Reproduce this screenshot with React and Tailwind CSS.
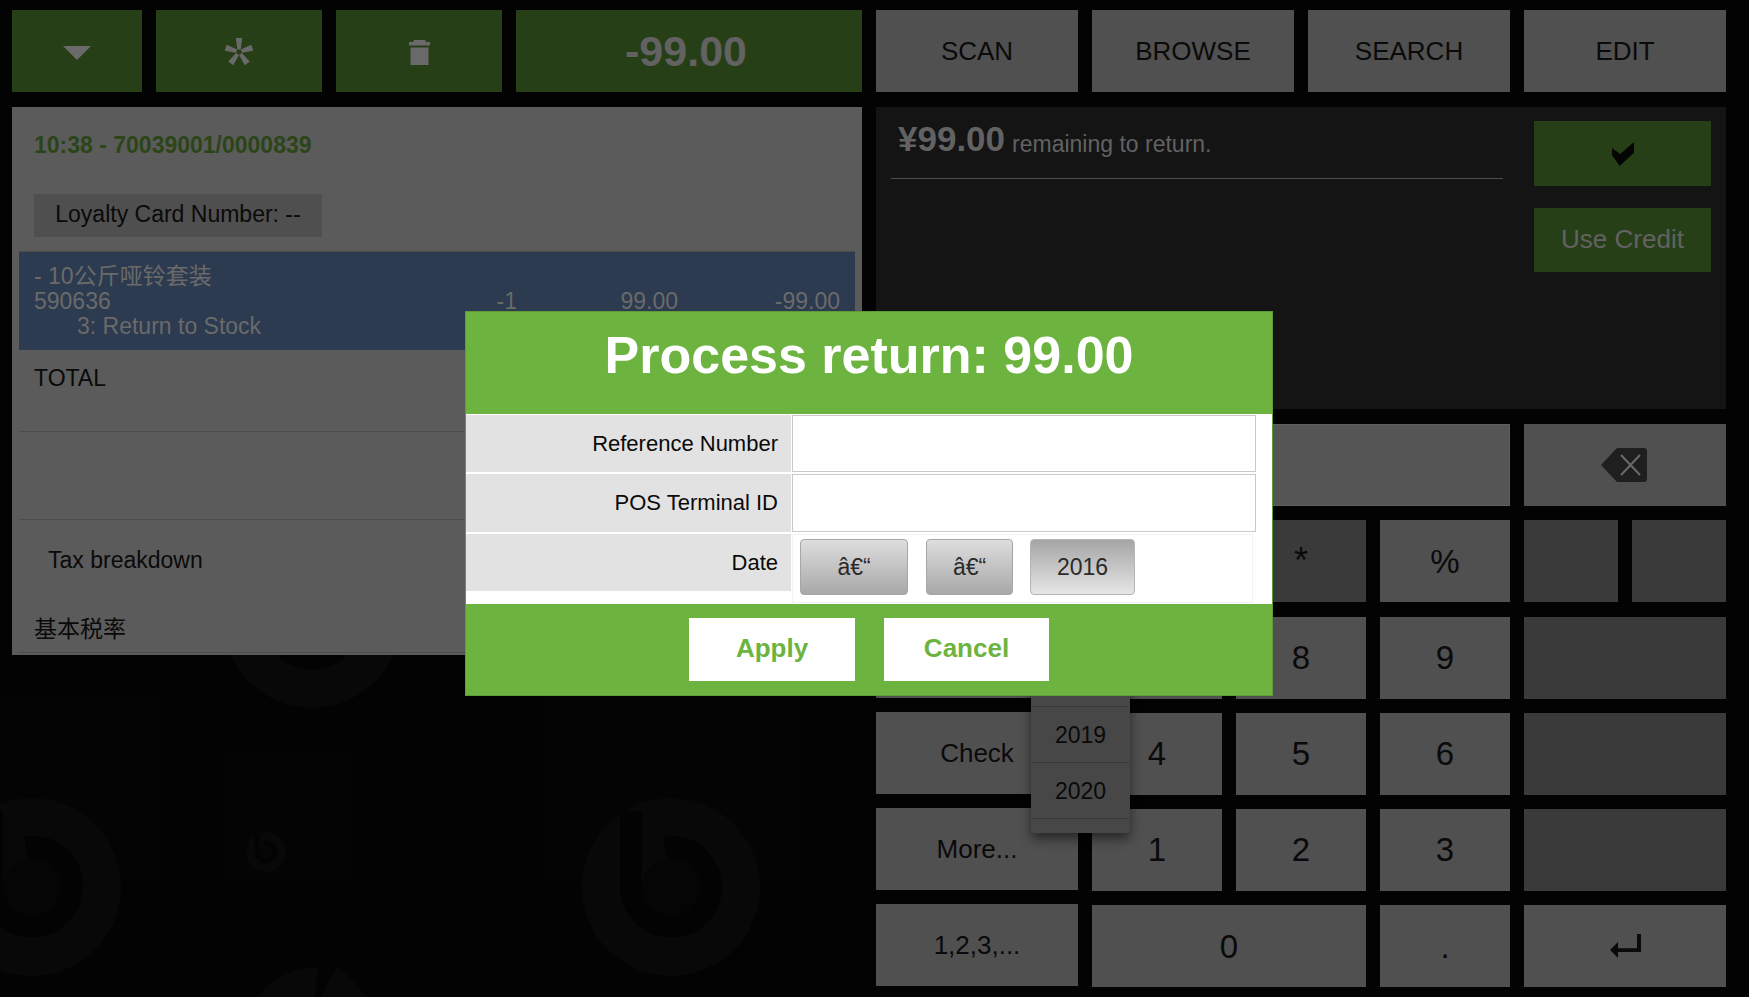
const sans = "font-['Liberation_Sans','Noto_Sans_CJK_SC',sans-serif]";

function Logo({ cx, cy, r }) {
  // faint round watermark behind the panels
  const s = r / 89;
  return (
    <g transform={`translate(${cx} ${cy}) scale(${s})`}>
      <circle r="89" fill="#080808" />
      <circle r="29" fill="#050505" />
      <path d="M-40 -76V0A40 40 0 1 0 -6 -40" fill="none" stroke="#030303" strokeWidth="22" />
    </g>
  );
}

function Key({ className = "bg-[#505050]", children }) {
  return (
    <div className={`flex items-center justify-center text-[#0a0a0a] ${className}`}>
      {children}
    </div>
  );
}

function GreenButton({ className = "", children }) {
  return (
    <div className={`flex h-[82px] items-center justify-center bg-[#273f17] text-[#626262] ${className}`}>
      {children}
    </div>
  );
}

export default function App() {
  const digit = "bg-[#505050] text-[33px]";
  const action = "bg-[#505050] text-[26px] h-[82px]";
  return (
    <div className={`relative flex h-screen overflow-hidden bg-[#030303] pl-3 pt-2.5 ${sans}`}>
      <svg className="absolute inset-0" width="1749" height="997">
        <rect x="0" y="700" width="163" height="177" fill="#040404" />
        <rect x="225" y="750" width="130" height="127" fill="#040404" />
        <rect x="544" y="700" width="258" height="177" fill="#040404" />
        <Logo cx={32} cy={887} r={89} />
        <Logo cx={312} cy={619} r={89} />
        <Logo cx={266} cy={852} r={20} />
        <Logo cx={671} cy={887} r={89} />
        <path d="M258 997q20-28 60-30l-3 30zM322 997q5-18 16-30q16 12 28 30z" fill="#080808" />
      </svg>

      {/* left column */}
      <div className="relative w-[850px] shrink-0">
        <div className="flex gap-[14px]">
          <GreenButton className="w-[130px]">
            <svg className="mt-[3px]" width="28" height="14" viewBox="0 0 28 14"><path d="M0 0h28L14 14z" fill="#6a6a6a" /></svg>
          </GreenButton>
          <GreenButton className="w-[166px]">
            <svg className="mt-[2px]" width="28" height="28" viewBox="-14 -14 28 28" fill="#6a6a6a">
              {[0, 72, 144, 216, 288].map((a) => (
                <path key={a} transform={`rotate(${a})`} d="M-1.700 -2.500L-3.100 -14H3.100L1.700 -2.500z" />
              ))}
            </svg>
          </GreenButton>
          <GreenButton className="w-[166px]">
            <svg className="mt-[2px]" width="21" height="25" viewBox="0 0 21 25" fill="#6a6a6a">
              <path d="M5 0h11l1 2h4v3.500H0V2h4zM1.500 7.500h18V25h-18z" />
            </svg>
          </GreenButton>
          <GreenButton className="flex-1 pr-[6px] text-[43px] font-bold">-99.00</GreenButton>
        </div>

        <div className="mt-[15px] h-[548px] overflow-hidden bg-[#5b5b5b] text-[23px] text-[#0a0a0a]">
          <div className="px-[22px] pt-[24px] font-bold leading-[28px] text-[#2b4519]">
            10:38 - 70039001/0000839
          </div>
          <div className="ml-[22px] mt-[35px] flex h-[43px] w-[288px] items-center justify-center bg-[#4f4f4f] pb-[3px]">
            Loyalty Card Number: --
          </div>
          <div className="mx-[7px] mt-[14px] h-[99px] border-t border-[#4d4d4d] bg-[#2c3b50] pl-[15px] pr-[15px] pt-[12px] leading-[25px] text-[#6a6a6a]">
            <div>- 10公斤哑铃套装</div>
            <div className="flex">
              <span className="flex-1">590636</span>
              <span className="w-[60px] text-right">-1</span>
              <span className="w-[161px] text-right">99.00</span>
              <span className="w-[162px] text-right">-99.00</span>
            </div>
            <div className="pl-[43px]">3: Return to Stock</div>
          </div>
          <div className="mx-[7px] h-[82px] border-b border-[#4d4d4d] pl-[15px] pt-[14px] leading-[28px]">TOTAL</div>
          <div className="mx-[7px] h-[88px] border-b border-[#4d4d4d]" />
          <div className="mx-[7px] pl-[29px] pt-[26px] leading-[28px]">Tax breakdown</div>
          <div className="mx-[7px] border-b border-[#4d4d4d] pl-[15px] pt-[41px] pb-[9px] leading-[28px]">基本税率</div>
        </div>
      </div>

      {/* right column */}
      <div className="relative ml-[14px] w-[850px] shrink-0">
        <div className="grid grid-cols-4 gap-[14px] text-[26px]">
          {["SCAN", "BROWSE", "SEARCH", "EDIT"].map((t) => (
            <Key key={t} className="h-[82px] bg-[#505050]">{t}</Key>
          ))}
        </div>

        <div className="mt-[15px] flex h-[302px] bg-[#141414] pl-[15px] pr-[15px] pt-[14px]">
          <div className="h-[58px] w-[612px] border-b border-[#4e4e4e] pl-[7px] text-[#626262]">
            <span className="text-[35px] font-bold leading-[36px]">¥99.00</span>
            <span className="ml-[7px] align-[-1px] text-[23px]">remaining to return.</span>
          </div>
          <div className="ml-[31px] flex w-[177px] flex-col gap-[22px]">
            <GreenButton className="!h-[65px]">
              <svg width="22" height="24" viewBox="0 0 22 24"><path d="M0 6.300L8.300 12 22 0v10.700L7.700 24 0 13z" fill="#050505" /></svg>
            </GreenButton>
            <GreenButton className="!h-[64px] pb-[2px] text-[26px] text-[#5d5d5d]">Use Credit</GreenButton>
          </div>
        </div>

        <div className="mt-[15px] flex gap-[14px]">
          <div className="flex w-[202px] flex-col gap-[14px]">
            <Key className={action} />
            <Key className={action} />
            <Key className={action} />
            <Key className={action}>Check</Key>
            <Key className={action}>More...</Key>
            <Key className={action}>1,2,3,...</Key>
          </div>
          <div className="grid flex-1 grid-cols-[130px_130px_130px_94px_94px] auto-rows-[82px] gap-x-[14px] gap-y-[14.3px]">
            <Key className="col-span-3 border border-[#5f5f5f] bg-[#555555]" />
            <Key className="col-span-2 bg-[#505050] pr-[2px]">
              <svg width="46" height="34" viewBox="0 0 46 34">
                <path d="M16 0h27a3 3 0 0 1 3 3v28a3 3 0 0 1-3 3H16L0 17z" fill="#1f1f1f" />
                <path d="M20 7l19 20M39 7L20 27" stroke="#6a6a6a" strokeWidth="2" />
              </svg>
            </Key>
            <Key className="bg-[#3a3a3a]" />
            <Key className="bg-[#3a3a3a] text-[36px]">*</Key>
            <Key className={digit}>%</Key>
            <Key className="bg-[#3a3a3a]" />
            <Key className="bg-[#3a3a3a]" />
            <Key className={digit}>7</Key>
            <Key className={digit}>8</Key>
            <Key className={digit}>9</Key>
            <Key className="col-span-2 bg-[#3a3a3a]" />
            <Key className={digit}>4</Key>
            <Key className={digit}>5</Key>
            <Key className={digit}>6</Key>
            <Key className="col-span-2 bg-[#3a3a3a]" />
            <Key className={digit}>1</Key>
            <Key className={digit}>2</Key>
            <Key className={digit}>3</Key>
            <Key className="col-span-2 bg-[#3a3a3a]" />
            <Key className={`col-span-2 ${digit}`}>0</Key>
            <Key className={digit}>.</Key>
            <Key className="col-span-2 bg-[#505050]">
              <svg width="31" height="24" viewBox="0 0 31 24">
                <path d="M27 0h4v18H8v-3.700h19z" fill="#0a0a0a" />
                <path d="M0 16l8-8v16z" fill="#0a0a0a" />
              </svg>
            </Key>
          </div>
        </div>
      </div>

      {/* year list of the date picker, open under the dialog */}
      <div className="absolute left-[1031px] top-[680px] h-[153px] w-[99px] overflow-hidden rounded-b-[4px] bg-[#474747] text-[23px] text-[#0a0a0a] shadow-[0_6px_12px_rgba(0,0,0,0.5)]">
        <div className="h-[27px] border-b border-[#3a3a3a]" />
        <div className="flex h-[56px] items-center justify-center border-b border-[#3a3a3a] pt-[2px]">2019</div>
        <div className="flex h-[56px] items-center justify-center border-b border-[#3a3a3a] pt-[2px]">2020</div>
      </div>

      {/* dialog */}
      <div className="absolute left-[465px] top-[311px] w-[808px] border border-[#5f9c37] bg-[#6db33f]">
        <div className="h-[102px] pt-[13px] text-center text-[52px] font-bold leading-[60px] text-white">
          Process return: 99.00
        </div>
        <div className="h-[190px] bg-white text-[22px] text-[#0a0a0a]">
          <div className="flex h-[60px] gap-px pt-px">
            <div className="h-[57px] w-[325px] bg-[#e2e2e2] pr-[13px] pt-[15px] text-right leading-[28px]">Reference Number</div>
            <div className="h-[57px] w-[464px] border border-[#c9c9c9]" />
          </div>
          <div className="flex h-[60px] gap-px">
            <div className="h-[58px] w-[325px] bg-[#e2e2e2] pr-[13px] pt-[15px] text-right leading-[28px]">POS Terminal ID</div>
            <div className="h-[58px] w-[464px] border border-[#c9c9c9]" />
          </div>
          <div className="flex gap-px">
            <div className="h-[57px] w-[325px] bg-[#e2e2e2] pr-[13px] pt-[15px] text-right leading-[28px]">Date</div>
            <div className="flex h-[69px] w-[461px] border border-[#f2f2f2] pl-[7px] pt-[4px] text-[23px] text-[#2a2a2a]">
              <div className="flex h-[56px] w-[108px] items-center justify-center rounded-[4px] border border-[#a6a6a6] bg-gradient-to-b from-[#dedede] to-[#a8a8a8]">â€“</div>
              <div className="ml-[18px] flex h-[56px] w-[87px] items-center justify-center rounded-[4px] border border-[#a6a6a6] bg-gradient-to-b from-[#dedede] to-[#a8a8a8]">â€“</div>
              <div className="ml-[17px] flex h-[56px] w-[105px] items-center justify-center rounded-[4px] border border-[#b5b5b5] bg-gradient-to-b from-[#a5a5a5] to-[#e6e6e6]">2016</div>
            </div>
          </div>
        </div>
        <div className="flex h-[91px] gap-[29px] pl-[223px] pt-[14px] text-[26px] font-bold text-[#6db33f]">
          <div className="flex h-[63px] w-[166px] items-center justify-center bg-white pb-[2px]">Apply</div>
          <div className="flex h-[63px] w-[165px] items-center justify-center bg-white pb-[2px]">Cancel</div>
        </div>
      </div>
    </div>
  );
}
